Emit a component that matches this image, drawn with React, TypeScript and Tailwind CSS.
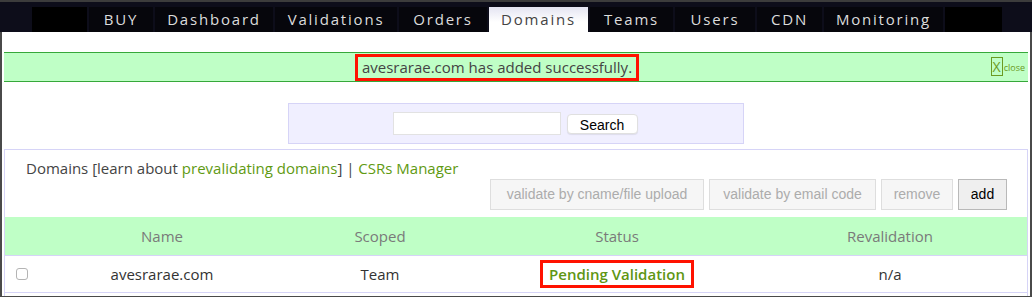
import React from "react";

const tabs: { label: string; w: string; active?: boolean }[] = [
  { label: "BUY", w: "w-[64px]" },
  { label: "Dashboard", w: "w-[118px]" },
  { label: "Validations", w: "w-[122px]" },
  { label: "Orders", w: "w-[88px]" },
  { label: "Domains", w: "w-[99px]", active: true },
  { label: "Teams", w: "w-[83px]" },
  { label: "Users", w: "w-[80px]" },
  { label: "CDN", w: "w-[65px]" },
  { label: "Monitoring", w: "w-[119px]" },
];

export default function App() {
  return (
    <div
      className="w-[1032px] h-[297px] overflow-hidden bg-white flex flex-col"
      style={{ fontFamily: "'Open Sans', 'Liberation Sans', sans-serif" }}
    >
      {/* nav */}
      <div className="h-[32px] shrink-0 bg-[#0d0d1a] border-t-2 border-[#3c3c3c] flex items-end pl-[32px] gap-[2px]">
        <div className="w-[55px] h-[25px] bg-black" />
        {tabs.map((t) => (
          <div
            key={t.label}
            className={`${t.w} h-[25px] flex items-center justify-center text-[15px] tracking-[1.8px] ${
              t.active
                ? "bg-gradient-to-b from-[#e4e4f2] to-white to-60% text-[#444]"
                : "bg-[#06060c] text-[#dcdcdc]"
            }`}
          >
            {t.label}
          </div>
        ))}
        <div className="w-[57px] h-[25px] bg-black" />
      </div>

      {/* body */}
      <div className="flex-1 border-x-2 border-b border-[#4a4a4a] flex flex-col px-[2px]">
        {/* alert */}
        <div className="mt-[20px] h-[30px] bg-[#bfffc6] border-y border-[#36a83a] flex items-center relative">
          <div className="flex-1 flex justify-center pr-[38px]">
            <span className="border-[3px] border-[#ff1200] px-[4px] h-[27px] flex items-center text-[15px] text-[#444]">
              avesrarae.com has added successfully.
            </span>
          </div>
          <div className="absolute right-[3px] top-[4px] flex items-center">
            <span className="border border-[#6b9a22] text-[#6b9a22] text-[14px] leading-[17px] px-[1px]">X</span>
            <span className="text-[#6b9a22] text-[9px] ml-[1px] mt-[3px]">close</span>
          </div>
        </div>

        {/* search */}
        <div className="mt-[21px] self-center w-[456px] h-[41px] bg-[#f0efff] border border-[#d6d4f7] flex items-center justify-center gap-[6px] pr-[2px]">
          <input className="w-[168px] h-[23px] bg-white border border-[#e2e2e2] outline-none" />
          <button
            className="w-[71px] h-[20px] bg-white rounded-[4px] border border-[#e0e0e0] shadow-[0_1px_1px_rgba(0,0,0,0.08)] text-[14px] text-black"
            style={{ fontFamily: "'Liberation Sans', Arial, sans-serif" }}
          >
            Search
          </button>
        </div>

        {/* panel */}
        <div className="mt-[5px] flex-1 border border-b-0 border-[#d6d4f7] flex flex-col">
          <div className="pt-[9px] pl-[21px] text-[15px] leading-[18px] text-[#444]">
            Domains [learn about <span className="text-[#5f9a12]">prevalidating domains</span>] |{" "}
            <span className="text-[#5f9a12]">CSRs Manager</span>
          </div>
          <div
            className="flex justify-end gap-[5px] pr-[20px] mt-[2px] text-[14px]"
            style={{ fontFamily: "'Liberation Sans', Arial, sans-serif" }}
          >
            <button className="h-[31px] w-[214px] bg-[#f6f6f6] border border-[#dedede] text-[#acacac]">
              validate by cname/file upload
            </button>
            <button className="h-[31px] w-[167px] bg-[#f6f6f6] border border-[#dedede] text-[#acacac]">
              validate by email code
            </button>
            <button className="h-[31px] w-[72px] bg-[#f6f6f6] border border-[#dedede] text-[#acacac]">
              remove
            </button>
            <button className="h-[31px] w-[49px] bg-[#efefef] border border-[#b9b9b9] text-black">
              add
            </button>
          </div>

          {/* table */}
          <div className="mt-[7px] flex h-[39px] bg-[#bfffc6] border-b border-[#d6d4f7] items-center text-[15px] font-medium text-[#7a7a7a]">
            <div className="w-[40px]" />
            <div className="w-[234px] text-center">Name</div>
            <div className="w-[202px] text-center">Scoped</div>
            <div className="w-[272px] text-center">Status</div>
            <div className="flex-1 text-center">Revalidation</div>
          </div>
          <div className="flex h-[37px] border-b border-[#d6d4f7] items-center text-[15px] text-[#333]">
            <div className="w-[40px] flex justify-center pr-[6px]">
              <span className="w-[12px] h-[12px] rounded-[3px] border border-[#b4b4b4] bg-white" />
            </div>
            <div className="w-[234px] text-center">avesrarae.com</div>
            <div className="w-[202px] text-center">Team</div>
            <div className="w-[272px] flex justify-center">
              <span className="border-[3px] border-[#ff1200] h-[28px] px-[6px] flex items-center font-semibold text-[#5e9613]">
                Pending Validation
              </span>
            </div>
            <div className="flex-1 text-center">n/a</div>
          </div>
        </div>
      </div>
    </div>
  );
}
